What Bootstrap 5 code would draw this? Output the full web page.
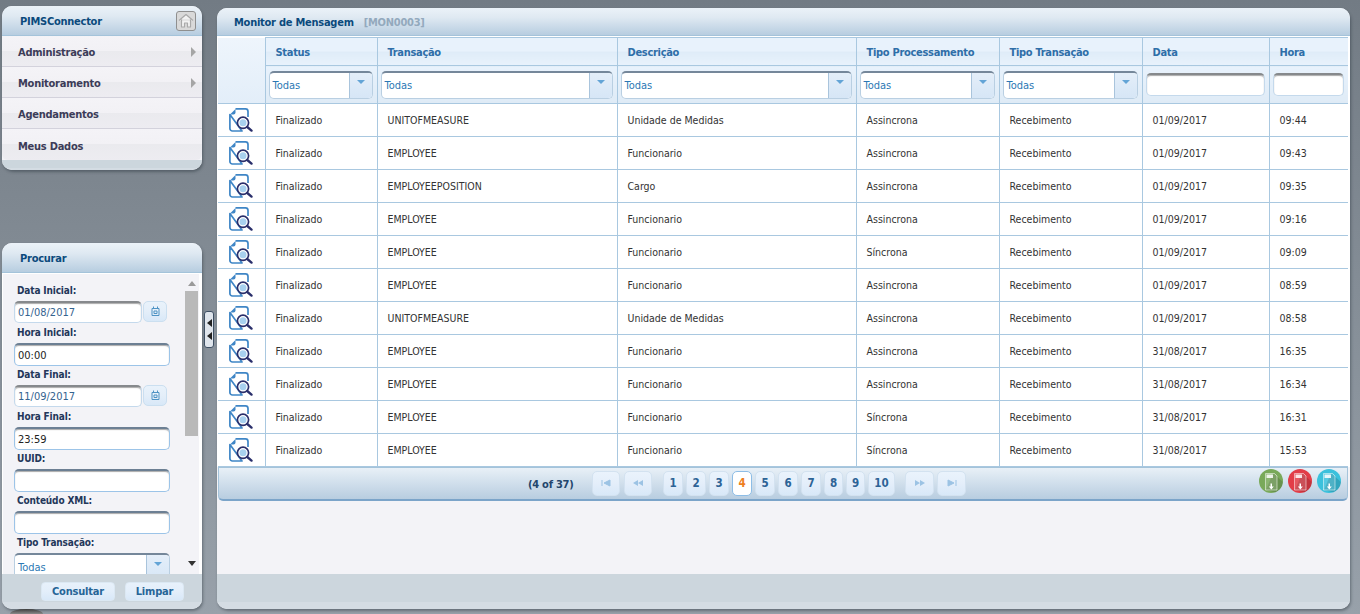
<!DOCTYPE html>
<html lang="pt-br">
<head>
  <meta charset="UTF-8">
  <title>Monitor de Mensagem - PIMSConnector</title>
  <link href="https://cdn.jsdelivr.net/npm/bootstrap@5.3.3/dist/css/bootstrap.min.css" rel="stylesheet">
  <style>
    html, body { height: 100%; }
    body {
      font-family: "DejaVu Sans Condensed", "Noto Sans", sans-serif;
      font-size: 10.5px;
      color: #333;
      background: linear-gradient(180deg, #727b84 0, #98a1aa 100%);
      overflow: hidden;
    }
    .shell { height: 614px; padding: 6px 10px 5px 2px; }
    .side-col { width: 200px; flex: none; }
    .pnl {
      background: #f3f3f7;
      border-radius: 10px;
      box-shadow: 1px 2px 3px rgba(40, 50, 60, .45);
      overflow: hidden;
    }
    .pnl-head {
      height: 30px;
      padding-top: 4px;
      background: linear-gradient(180deg, #ebf2f8 0, #dfe9f2 35%, #b7cde0 100%);
      border-bottom: 1px solid #a4c3da;
      color: #0b4a7c;
      font-weight: 700;
      font-size: 11px;
      letter-spacing: -.25px;
    }
    .pnl-title { margin-left: 2px; }
    .pnl-foot { background: linear-gradient(180deg, #ccd6dd 0, #ccd6dd 80%, #d4dce3 80%); }

    .home-btn {
      width: 20px; height: 20px; margin: -4px 6px 0 0;
      background: #d9d9d9; border: 1px solid #8f8f8f; border-radius: 3px;
    }
    .menu-row {
      height: 31px;
      padding: 5px 6px 0 16px;
      background: linear-gradient(180deg, #f4f3f7 0, #f2f1f5 50%, #eaeaee 50%, #edecf1 100%);
      border: 0;
      border-bottom: 1px solid #d3d2dc;
      border-radius: 0;
      color: #3c3c58;
      font-weight: 700;
      font-size: 11px;
      letter-spacing: -.25px;
    }
    .menu-row:last-child { border-bottom: 0; }
    .menu-arrow {
      width: 0; height: 0;
      margin-top: -3px;
      border-left: 5px solid #a5a5a5;
      border-top: 5px solid transparent;
      border-bottom: 5px solid transparent;
    }

    .search-pnl { height: 366px; }
    .search-body { background: #fff; padding: 1px 0 0 1px; min-height: 0; }
    .search-fields { background: #f3f3f7; padding: 8px 0 0 11px; overflow: hidden; }
    .fld { height: 42px; width: 156px; }
    .fld label { display: block; height: 19px; line-height: 18px; color: #23375a; font-weight: 700; font-size: 10px; letter-spacing: -.15px; margin-left: 3px; }
    .tx-input {
      display: block;
      height: 23px; width: 100%;
      padding: 1px 3px 0;
      font-size: 11px;
      color: #222;
      background: #fff;
      border: 1px solid #9cc4e8;
      border-top: 2px solid #6c7f93;
      border-radius: 5px;
      box-shadow: inset 0 1px 1px #aaa;
      outline: 0;
    }
    .tx-input.date-in { width: 128px; height: 22px; color: #35638f; border-color: #c4d9ec; border-top-color: #86898c; }
    .cal-btn {
      width: 24px; height: 21px;
      margin-left: 1px;
      background: linear-gradient(180deg, #e9f2fb 0, #e4eef9 50%, #d8e8f8 100%);
      border: 1px solid #cbdff0;
      border-radius: 5px;
    }
    .sel-box {
      height: 28px;
      background: #fff;
      border: 1px solid #b9cfe2;
      border-top: 2px solid #75879a;
      border-radius: 5px;
      color: #2b78b4;
      font-size: 11px;
      font-weight: 400;
      overflow: hidden;
    }
    .sel-text { padding: 5px 0 0 3px; }
    .sel-arrow {
      width: 23px;
      background: linear-gradient(180deg, #e4eef9 0, #d6e6f6 100%);
      border-left: 1px solid #a9c4dc;
    }
    .sel-arrow::after {
      content: "";
      margin-top: -6px;
      border-top: 4px solid #63a4d6;
      border-left: 4px solid transparent;
      border-right: 4px solid transparent;
    }
    .search-bar { width: 15px; margin: 0 3px 0 0; flex: none; background: #f3f3f7; padding-top: 7px; }
    .bar-up { border-bottom: 5px solid #9a9a9a; border-left: 4px solid transparent; border-right: 4px solid transparent; }
    .bar-thumb { width: 13px; height: 145px; background: #b9b9b9; margin-top: 5px; }
    .bar-down { border-top: 5px solid #333; border-left: 4px solid transparent; border-right: 4px solid transparent; margin-top: 125px; }
    .search-foot { height: 35px; gap: 10px; padding-right: 18px; }
    .soft-btn {
      height: 19px;
      padding: 0;
      background: linear-gradient(180deg, #e7f1fb 0, #e3eefa 50%, #d8e8f8 100%);
      border: 1px solid #dbe8f3;
      border-radius: 4px;
      color: #266597;
      font-size: 11px;
      font-weight: 700;
      letter-spacing: -.2px;
      line-height: 17px;
    }
    .btn-run { width: 74px; }
    .btn-clear { width: 59px; }
    .dock-stub {
      width: 33px; height: 5px;
      margin: 0 0 -5px 8px;
      background: linear-gradient(180deg, #3c3c3c 0, #8a8a8a 100%);
      border-radius: 50% 50% 0 0 / 100% 100% 0 0;
    }

    .split-col { width: 15px; flex: none; padding-top: 305px; }
    .split-grip {
      width: 10px; height: 37px;
      background: #dfe5ec;
      border: 1px solid #3e4f63;
      border-radius: 3px;
      margin-left: 2px;
      gap: 5px;
    }
    .split-grip i { border-right: 5px solid #222; border-top: 4px solid transparent; border-bottom: 4px solid transparent; }

    .main-pnl { width: 1133px; flex: none; margin-top: 2px; }
    .main-head { height: 28px; padding-left: 17px; gap: 10px; }
    .main-head small { color: #93a9bd; font-size: 11px; font-weight: 700; }
    .grid-wrap { background: #fff; padding: 1px 2px 0 1px; flex: none; }
    .msg-grid { table-layout: fixed; width: 1130px; margin: 0; border-collapse: collapse; --bs-table-bg: transparent; }
    .msg-grid th, .msg-grid td { border: 1px solid #a9c8e0; padding: 2px 10px 0; vertical-align: middle; }
    .msg-grid tr > :first-child { border-left: 0; }
    .msg-grid tr > :last-child { border-right: 0; }
    .msg-grid thead th { color: #2e6ea8; font-size: 11px; letter-spacing: -.3px; height: 28px; padding-top: 4px; font-weight: 700; background: linear-gradient(180deg, #e8f2fc 0, #e8f2fc 50%, #dfecf8 50%, #e8f2fc 100%); }
    .msg-grid thead tr + tr th { height: 38px; padding: 0 4px 0 3px; letter-spacing: 0; background: linear-gradient(180deg, #e8f2fc 0, #dfebf6 100%); }
    .msg-grid thead th.blank-cell { background: linear-gradient(180deg, #eef5fc 0, #e3eef9 100%); border-top: 0; border-bottom: 1px solid #a9c8e0; }
    .msg-grid tbody td { height: 33px; color: #333; white-space: nowrap; overflow: hidden; }
    .msg-grid tbody td:first-child { padding: 0; text-align: center; }
    .msg-grid .tx-input { height: 23px; border-color: #c4d9ec; border-top-color: #86898c; }
    .doc-ico { width: 24px; height: 24px; display: inline-block; vertical-align: middle; }

    .pager-bar {
      height: 34px;
      width: 1130px;
      margin-left: 1px;
      padding: 0 6px 0 309px;
      background: linear-gradient(180deg, #e8f0f7 0, #b8cde0 100%);
      border: 1px solid #a4c3da;
      border-bottom: 2px solid #7ba4c9;
      border-radius: 0 0 5px 5px;
      gap: 3px;
    }
    .pager-info { width: 61px; padding-top: 4px; color: #23466c; font-weight: 700; font-size: 11px; letter-spacing: -.25px; }
    .pg-btn {
      height: 25px; width: 20px;
      padding: 2px 0 0;
      margin-top: -1px;
      background: linear-gradient(180deg, #eaf3fc 0, #e4eefa 50%, #d8e8f8 100%);
      border: 1px solid #d3e2f0;
      border-radius: 5px;
      color: #2d6396;
      font-weight: 700;
      font-size: 11.5px;
    }
    .pg-btn.on { background: #fff; border-color: #8dbde6; color: #ee7f1e; }
    .pg-btn.wide { width: 28px; }
    .pg-btn.wide-end { width: 29px; }
    .pg-btn.slim { width: 19px; }
    .pg-btn.ten { width: 27px; margin-right: 7px; }
    .pg-btn.first-gap { margin-right: 1px; }
    .pg-btn svg { width: 14px; height: 8px; display: block; margin: -3px auto 0; }
    .export-set { gap: 5px; margin-top: -6px; }
    .export-btn { width: 24px; height: 24px; border-radius: 50%; overflow: hidden; display: block; }
    .grid-empty { background: #f3f3f7; }
    .main-foot { height: 35px; flex: none; }
  </style>
</head>
<body>
  <svg width="0" height="0" class="position-absolute">
    <symbol id="docLens" viewBox="0 0 24 24">
      <path d="M6.500 .9H16.500a2.500 2.500 0 0 1 2.500 2.500V9M13 23H3.400a2.500 2.500 0 0 1-2.500-2.500V6.500z" fill="none" stroke="#3f86c6" stroke-width="1.700" stroke-linejoin="round"/>
      <path d="M6.500 1v3.500a2 2 0 0 1-2 2H1z" fill="#3f86c6"/>
      <circle cx="14" cy="14.800" r="5.600" fill="#fff" stroke="#2a2f6b" stroke-width="1.700"/>
      <circle cx="14" cy="14.800" r="3.500" fill="#a8d0ee"/>
      <path d="M18.300 19l4.200 3.600" stroke="#2a2f6b" stroke-width="2.400" stroke-linecap="round"/>
    </symbol>
    <symbol id="fileDown" viewBox="0 0 24 24">
      <path d="M14 4l10 9v11H18.500L7 21z" fill="#000" opacity=".14"/>
      <path d="M6.500 4.500h9l2.500 2.500v14H6.500z" fill="#fff" fill-opacity=".14" stroke="#fff" stroke-opacity=".75" stroke-width=".7"/>
      <path d="M7.500 5.500h6.500v3.500H7.500z" fill="#fff" opacity=".85"/>
      <path d="M11.500 14.500h1.500v3h1.800l-2.500 3-2.500-3h1.700z" fill="#fff"/>
    </symbol>
  </svg>

  <div class="shell d-flex">
    <div class="side-col d-flex flex-column justify-content-between">
      <div class="pnl d-flex flex-column">
        <div class="pnl-head d-flex align-items-center justify-content-between ps-3">
          <span class="pnl-title">PIMSConnector</span>
          <span class="home-btn d-flex align-items-center justify-content-center">
            <svg width="16" height="15" viewBox="0 0 16 15"><path d="M1 7.500L8 1.500l7 6M3.500 6.500V14h3v-4h3v4h3V6.500" fill="#f2f2f2" stroke="#a9a9a9" stroke-width="1.200" stroke-linejoin="round"/></svg>
          </span>
        </div>
        <div class="list-group">
          <a class="list-group-item menu-row d-flex align-items-center justify-content-between">Administração<span class="menu-arrow"></span></a>
          <a class="list-group-item menu-row d-flex align-items-center justify-content-between">Monitoramento<span class="menu-arrow"></span></a>
          <a class="list-group-item menu-row d-flex align-items-center justify-content-between">Agendamentos</a>
          <a class="list-group-item menu-row d-flex align-items-center justify-content-between">Meus Dados</a>
        </div>
        <div class="pnl-foot" style="height:10px"></div>
      </div>

      <div>
        <div class="pnl search-pnl d-flex flex-column">
          <div class="pnl-head d-flex align-items-center ps-3 flex-none"><span class="pnl-title">Procurar</span></div>
          <div class="search-body d-flex flex-grow-1">
            <div class="search-fields flex-grow-1">
              <div class="fld"><label>Data Inicial:</label><div class="d-flex"><input class="tx-input date-in" value="01/08/2017"><span class="cal-btn d-flex align-items-center justify-content-center"><svg width="9" height="10" viewBox="0 0 9 10"><path d="M1 2.500h7v7H1zM2.500 .5v2M6.500 .5v2M3 5h3v2.500H3z" fill="none" stroke="#4f93c4"/></svg></span></div></div>
              <div class="fld"><label>Hora Inicial:</label><input class="tx-input" value="00:00"></div>
              <div class="fld"><label>Data Final:</label><div class="d-flex"><input class="tx-input date-in" value="11/09/2017"><span class="cal-btn d-flex align-items-center justify-content-center"><svg width="9" height="10" viewBox="0 0 9 10"><path d="M1 2.500h7v7H1zM2.500 .5v2M6.500 .5v2M3 5h3v2.500H3z" fill="none" stroke="#4f93c4"/></svg></span></div></div>
              <div class="fld"><label>Hora Final:</label><input class="tx-input" value="23:59"></div>
              <div class="fld"><label>UUID:</label><input class="tx-input"></div>
              <div class="fld"><label>Conteúdo XML:</label><input class="tx-input"></div>
              <div class="fld"><label>Tipo Transação:</label><div class="sel-box d-flex"><span class="sel-text flex-grow-1">Todas</span><span class="sel-arrow d-flex align-items-center justify-content-center"></span></div></div>
            </div>
            <div class="search-bar d-flex flex-column align-items-center">
              <span class="bar-up"></span><span class="bar-thumb"></span><span class="bar-down"></span>
            </div>
          </div>
          <div class="pnl-foot search-foot d-flex align-items-center justify-content-end flex-none">
            <button class="soft-btn btn-run" type="button">Consultar</button>
            <button class="soft-btn btn-clear" type="button">Limpar</button>
          </div>
        </div>
        <div class="dock-stub"></div>
      </div>
    </div>

    <div class="split-col d-flex align-items-start">
      <span class="split-grip d-flex flex-column align-items-center justify-content-center"><i></i><i></i></span>
    </div>

    <div class="pnl main-pnl d-flex flex-column">
      <div class="pnl-head main-head d-flex align-items-center flex-none"><span>Monitor de Mensagem</span><small>[MON0003]</small></div>
      <div class="grid-wrap">
        <table class="table msg-grid">
          <colgroup><col style="width:47px"><col style="width:112px"><col style="width:240px"><col style="width:239px"><col style="width:143px"><col style="width:143px"><col style="width:127px"><col></colgroup>
          <thead>
            <tr><th class="blank-cell" rowspan="2"></th><th>Status</th><th>Transação</th><th>Descrição</th><th>Tipo Processamento</th><th>Tipo Transação</th><th>Data</th><th>Hora</th></tr>
            <tr>
              <th><div class="sel-box d-flex"><span class="sel-text flex-grow-1">Todas</span><span class="sel-arrow d-flex align-items-center justify-content-center"></span></div></th>
              <th><div class="sel-box d-flex"><span class="sel-text flex-grow-1">Todas</span><span class="sel-arrow d-flex align-items-center justify-content-center"></span></div></th>
              <th><div class="sel-box d-flex"><span class="sel-text flex-grow-1">Todas</span><span class="sel-arrow d-flex align-items-center justify-content-center"></span></div></th>
              <th><div class="sel-box d-flex"><span class="sel-text flex-grow-1">Todas</span><span class="sel-arrow d-flex align-items-center justify-content-center"></span></div></th>
              <th><div class="sel-box d-flex"><span class="sel-text flex-grow-1">Todas</span><span class="sel-arrow d-flex align-items-center justify-content-center"></span></div></th>
              <th><input class="tx-input"></th>
              <th><input class="tx-input"></th>
            </tr>
          </thead>
          <tbody>
            <tr><td><svg class="doc-ico"><use href="#docLens"/></svg></td><td>Finalizado</td><td>UNITOFMEASURE</td><td>Unidade de Medidas</td><td>Assincrona</td><td>Recebimento</td><td>01/09/2017</td><td>09:44</td></tr>
            <tr><td><svg class="doc-ico"><use href="#docLens"/></svg></td><td>Finalizado</td><td>EMPLOYEE</td><td>Funcionario</td><td>Assincrona</td><td>Recebimento</td><td>01/09/2017</td><td>09:43</td></tr>
            <tr><td><svg class="doc-ico"><use href="#docLens"/></svg></td><td>Finalizado</td><td>EMPLOYEEPOSITION</td><td>Cargo</td><td>Assincrona</td><td>Recebimento</td><td>01/09/2017</td><td>09:35</td></tr>
            <tr><td><svg class="doc-ico"><use href="#docLens"/></svg></td><td>Finalizado</td><td>EMPLOYEE</td><td>Funcionario</td><td>Assincrona</td><td>Recebimento</td><td>01/09/2017</td><td>09:16</td></tr>
            <tr><td><svg class="doc-ico"><use href="#docLens"/></svg></td><td>Finalizado</td><td>EMPLOYEE</td><td>Funcionario</td><td>Síncrona</td><td>Recebimento</td><td>01/09/2017</td><td>09:09</td></tr>
            <tr><td><svg class="doc-ico"><use href="#docLens"/></svg></td><td>Finalizado</td><td>EMPLOYEE</td><td>Funcionario</td><td>Assincrona</td><td>Recebimento</td><td>01/09/2017</td><td>08:59</td></tr>
            <tr><td><svg class="doc-ico"><use href="#docLens"/></svg></td><td>Finalizado</td><td>UNITOFMEASURE</td><td>Unidade de Medidas</td><td>Assincrona</td><td>Recebimento</td><td>01/09/2017</td><td>08:58</td></tr>
            <tr><td><svg class="doc-ico"><use href="#docLens"/></svg></td><td>Finalizado</td><td>EMPLOYEE</td><td>Funcionario</td><td>Assincrona</td><td>Recebimento</td><td>31/08/2017</td><td>16:35</td></tr>
            <tr><td><svg class="doc-ico"><use href="#docLens"/></svg></td><td>Finalizado</td><td>EMPLOYEE</td><td>Funcionario</td><td>Assincrona</td><td>Recebimento</td><td>31/08/2017</td><td>16:34</td></tr>
            <tr><td><svg class="doc-ico"><use href="#docLens"/></svg></td><td>Finalizado</td><td>EMPLOYEE</td><td>Funcionario</td><td>Síncrona</td><td>Recebimento</td><td>31/08/2017</td><td>16:31</td></tr>
            <tr><td><svg class="doc-ico"><use href="#docLens"/></svg></td><td>Finalizado</td><td>EMPLOYEE</td><td>Funcionario</td><td>Síncrona</td><td>Recebimento</td><td>31/08/2017</td><td>15:53</td></tr>
          </tbody>
        </table>
      </div>
      <div class="pager-bar d-flex align-items-center flex-none">
        <span class="pager-info">(4 of 37)</span>
        <button class="pg-btn wide first-gap" type="button"><svg viewBox="0 0 14 8"><path d="M3 1v6M11 1v6L5 4z" stroke="#9cc3e4" fill="#9cc3e4"/></svg></button>
        <button class="pg-btn wide me-2" type="button"><svg viewBox="0 0 14 8"><path d="M7 1v6L2 4zM12 1v6L7 4z" fill="#9cc3e4"/></svg></button>
        <button class="pg-btn" type="button">1</button>
        <button class="pg-btn" type="button">2</button>
        <button class="pg-btn" type="button">3</button>
        <button class="pg-btn on" type="button">4</button>
        <button class="pg-btn" type="button">5</button>
        <button class="pg-btn" type="button">6</button>
        <button class="pg-btn" type="button">7</button>
        <button class="pg-btn slim" type="button">8</button>
        <button class="pg-btn slim" type="button">9</button>
        <button class="pg-btn ten" type="button">10</button>
        <button class="pg-btn wide-end" type="button"><svg viewBox="0 0 14 8"><path d="M2 1v6L7 4zM7 1v6L12 4z" fill="#9cc3e4"/></svg></button>
        <button class="pg-btn wide-end" type="button"><svg viewBox="0 0 14 8"><path d="M3 1v6L9 4zM11 1v6" stroke="#9cc3e4" fill="#9cc3e4"/></svg></button>
        <span class="export-set d-flex ms-auto">
          <svg class="export-btn" style="background:#79a95a"><use href="#fileDown"/></svg>
          <svg class="export-btn" style="background:#e23d48"><use href="#fileDown"/></svg>
          <svg class="export-btn" style="background:#3bc1dc"><use href="#fileDown"/></svg>
        </span>
      </div>
      <div class="grid-empty flex-grow-1"></div>
      <div class="pnl-foot main-foot"></div>
    </div>
  </div>
</body>
</html>
